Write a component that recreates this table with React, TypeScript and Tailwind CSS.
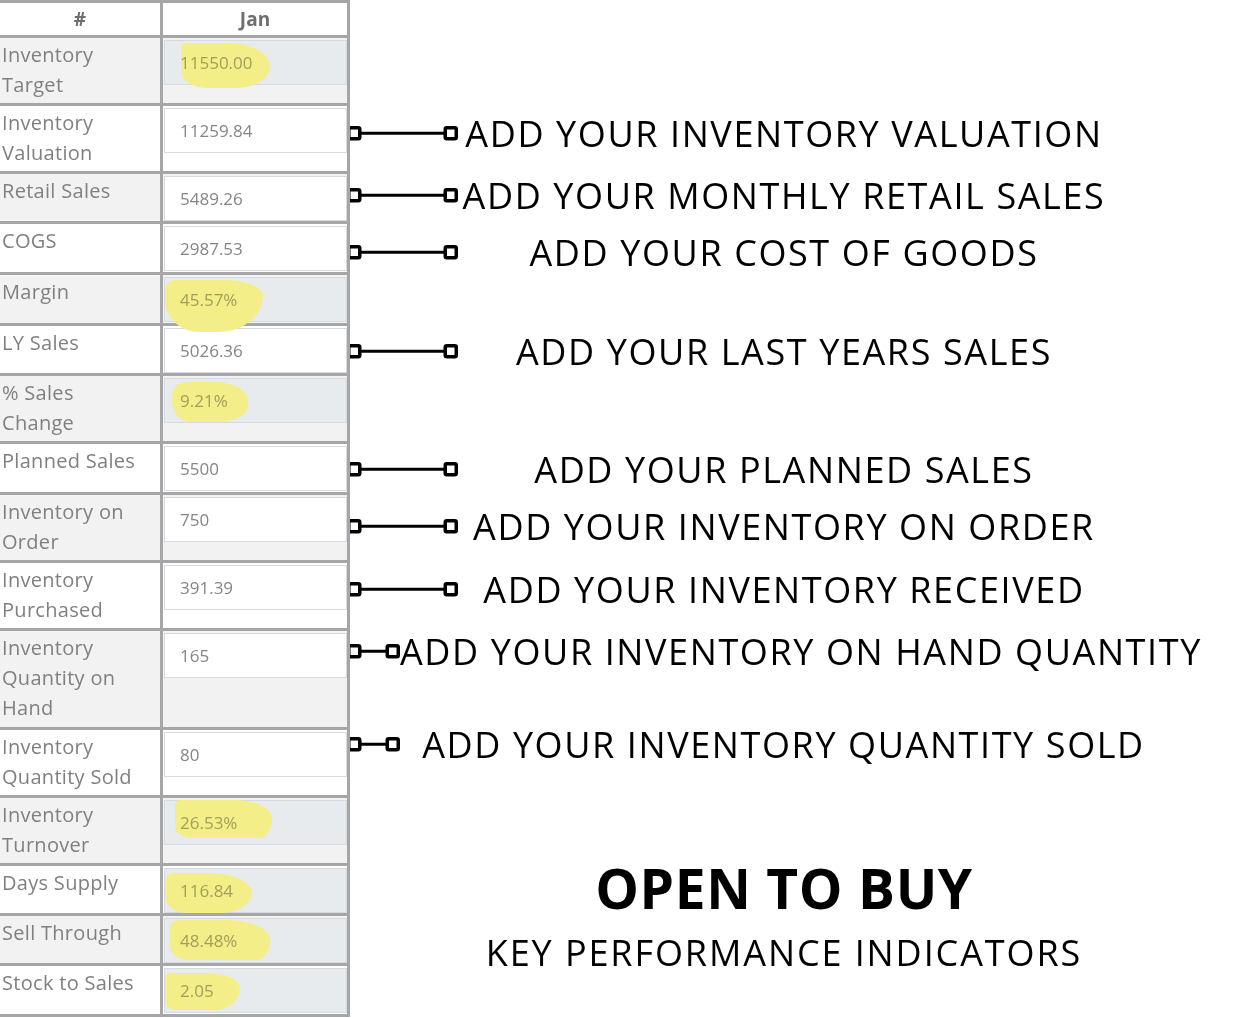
import React from 'react'

type Row = {
  label: string[]
  value: string
  readOnly?: boolean
  gray: boolean
  note?: string
  short?: boolean
  noteTop?: string
  hl?: string
}

const rows: Row[] = [
  { label: ['Inventory', 'Target'], value: '11550.00', readOnly: true, gray: true, hl: 'left-[18px] top-[5px] w-[89px] h-[45px] rounded-[6px_70%_60%_45%/8px_80%_70%_55%]' },
  { label: ['Inventory', 'Valuation'], value: '11259.84', gray: false, note: 'ADD YOUR INVENTORY VALUATION', noteTop: 'mt-[13px]' },
  { label: ['Retail Sales'], value: '5489.26', gray: true, note: 'ADD YOUR MONTHLY RETAIL SALES', noteTop: 'mt-[7px]' },
  { label: ['COGS'], value: '2987.53', gray: false, note: 'ADD YOUR COST OF GOODS', noteTop: 'mt-[14px]' },
  { label: ['Margin'], value: '45.57%', readOnly: true, gray: true, hl: 'left-[2px] top-[5px] w-[98px] h-[52px] rounded-[10px_40%_45%_35%/10px_30%_70%_60%]' },
  { label: ['LY Sales'], value: '5026.36', gray: false, note: 'ADD YOUR LAST YEARS SALES', noteTop: 'mt-[11px]' },
  { label: ['% Sales', 'Change'], value: '9.21%', readOnly: true, gray: true, hl: 'left-[9px] top-[6px] w-[76px] h-[40px] rounded-[14px_45%_40%_20px]' },
  { label: ['Planned Sales'], value: '5500', gray: false, note: 'ADD YOUR PLANNED SALES', noteTop: 'mt-[11px]' },
  { label: ['Inventory on', 'Order'], value: '750', gray: true, note: 'ADD YOUR INVENTORY ON ORDER', noteTop: 'mt-[17px]' },
  { label: ['Inventory', 'Purchased'], value: '391.39', gray: false, note: 'ADD YOUR INVENTORY RECEIVED', noteTop: 'mt-[12px]' },
  { label: ['Inventory', 'Quantity on', 'Hand'], value: '165', gray: true, note: 'ADD YOUR INVENTORY ON HAND QUANTITY', short: true, noteTop: 'mt-[6px]' },
  { label: ['Inventory', 'Quantity Sold'], value: '80', gray: false, note: 'ADD YOUR INVENTORY QUANTITY SOLD', short: true, noteTop: 'mt-0' },
  { label: ['Inventory', 'Turnover'], value: '26.53%', readOnly: true, gray: true, hl: 'left-[12px] top-[2px] w-[97px] h-[38px] rounded-[8px_60%_20%_30%/8px_70%_80%_40%]' },
  { label: ['Days Supply'], value: '116.84', readOnly: true, gray: false, hl: 'left-[2px] top-[7px] w-[87px] h-[40px] rounded-[10px_60%_45%_30%/10px_60%_60%_50%]' },
  { label: ['Sell Through'], value: '48.48%', readOnly: true, gray: true, hl: 'left-[7px] top-[4px] w-[100px] h-[40px] rounded-[12px_60%_20%_25%/10px_70%_70%_50%]' },
  { label: ['Stock to Sales'], value: '2.05', readOnly: true, gray: false, hl: 'left-[2px] top-[7px] w-[75px] h-[37px] rounded-[8px_65%_50%_20%/8px_60%_90%_40%]' },
]

function Connector({ short }: { short?: boolean }) {
  const w = short ? 53 : 111
  return (
    <svg width={w} height={16} viewBox={`0 0 ${w} 16`} className="shrink-0 -ml-[3px]">
      <rect x={1.75} y={1.75} width={11} height={11} rx={1.5} fill="white" stroke="black" strokeWidth={3.5} />
      <line x1={14} y1={7.25} x2={w - 14} y2={7.25} stroke="black" strokeWidth={3} />
      <rect x={w - 12.75} y={1.75} width={11} height={11} rx={1.5} fill="white" stroke="black" strokeWidth={3.5} />
    </svg>
  )
}

export default function App() {
  const last = rows.length - 1
  return (
    <div className="w-[1250px] h-[1018px] overflow-hidden bg-white font-['Open_Sans','Noto_Sans',sans-serif]">
      <div className="grid grid-cols-[160px_190px_minmax(0,1fr)] grid-rows-[35px_68px_68px_50px_51px_51px_50px_68px_51px_68px_68px_99px_68px_68px_50px_50px_54px]">
        {/* header */}
        <div className="border-t-[3px] border-[#a6a6a6] bg-white flex items-center justify-center text-[19px] font-bold text-[#6e6e6e]">
          #
        </div>
        <div className="border-t-[3px] border-x-[3px] border-[#a6a6a6] bg-white flex items-center justify-center text-[19px] font-bold text-[#6e6e6e]">
          Jan
        </div>
        <div />

        {/* title block beside the last rows */}
        <div className="col-start-3 row-start-14 row-span-4 flex flex-col items-center pr-[32px] pt-[65px]">
          <p className="text-[55px] leading-[56px] font-bold text-black tracking-[0.6px] whitespace-nowrap">OPEN TO BUY</p>
          <p className="mt-[19px] text-[36px] leading-[36px] text-black tracking-[1.9px] whitespace-nowrap">
            KEY PERFORMANCE INDICATORS
          </p>
        </div>

        {rows.map((r, i) => {
          const bg = r.gray ? 'bg-[#f2f2f2]' : 'bg-white'
          const bottom = i === last ? 'border-b-[3px]' : ''
          return (
            <React.Fragment key={r.label.join(' ')}>
              <div className={`border-t-[3px] ${bottom} border-[#a6a6a6] ${bg} pl-[2px] pt-[2px] text-[20px] leading-[30px] text-[#808080] tracking-[0.3px]`}>
                {r.label.map((l) => (
                  <div key={l} className="whitespace-nowrap">{l}</div>
                ))}
              </div>
              <div className={`relative border-t-[3px] border-x-[3px] ${bottom} border-[#a6a6a6] ${bg}`}>
                <div
                  className={`ml-[1px] mt-[2px] w-[183px] h-[45px] border border-[#d5dbe1] ${
                    r.readOnly ? 'bg-[#e8ebee]' : 'bg-white'
                  }`}
                >
                  <input
                    readOnly
                    value={r.value}
                    className={`relative z-[2] block w-full h-full bg-transparent px-[15px] text-[17px] outline-none ${
                      r.readOnly ? 'text-[#ababab] mix-blend-multiply' : 'text-[#858585]'
                    }`}
                  />
                </div>
                {r.hl && (
                  <span className={`absolute z-[1] ${r.hl} bg-[#f3ee87] pointer-events-none`} />
                )}
              </div>
              {r.note ? (
                <div className="flex items-start min-w-0">
                  <div className={`flex items-center h-[36px] w-full ${r.noteTop} ${r.short ? 'pr-[83px]' : 'pr-[140px]'}`}>
                    <Connector short={r.short} />
                    <span className="flex-1 text-center whitespace-nowrap text-[36px] leading-[36px] text-black tracking-[1.6px]">
                      {r.note}
                    </span>
                  </div>
                </div>
              ) : i < 12 ? (
                <div />
              ) : null}
            </React.Fragment>
          )
        })}
      </div>
    </div>
  )
}
